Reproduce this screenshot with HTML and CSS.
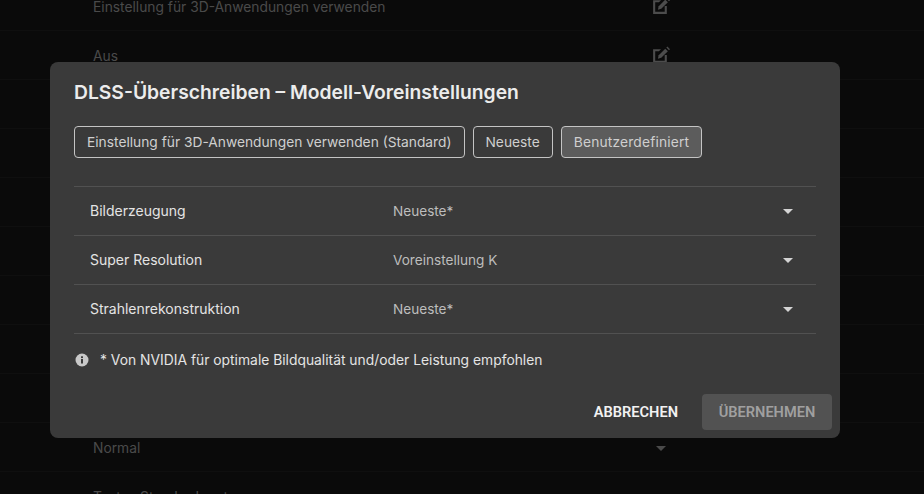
FILE: index.html
```html
<!DOCTYPE html>
<html lang="de">
<head>
<meta charset="utf-8">
<title>DLSS-Überschreiben</title>
<link rel="stylesheet" href="styles.css">
</head>
<body>
<main class="page">
  <div class="bg-row"><span class="bg-label">Einstellung für 3D-Anwendungen verwenden</span><svg class="bg-icon" viewBox="0 0 18 18"><path d="M9.500 3H2v13h13V8.500h-2V14H4V5h3.500z" fill="currentColor"/><path d="M6.500 12l.8-3.200L13.500 2.500l2.500 2.500-6.300 6.200z" fill="currentColor"/><path d="M14.500 1.500l1-1 2.500 2.500-1 1z" fill="currentColor"/></svg></div>
  <div class="bg-row"><span class="bg-label">Aus</span><svg class="bg-icon" viewBox="0 0 18 18"><path d="M9.500 3H2v13h13V8.500h-2V14H4V5h3.500z" fill="currentColor"/><path d="M6.500 12l.8-3.200L13.500 2.500l2.500 2.500-6.300 6.200z" fill="currentColor"/><path d="M14.500 1.500l1-1 2.500 2.500-1 1z" fill="currentColor"/></svg></div>
  <div class="bg-row"></div>
  <div class="bg-row"></div>
  <div class="bg-row"></div>
  <div class="bg-row"></div>
  <div class="bg-row"></div>
  <div class="bg-row"></div>
  <div class="bg-row"></div>
  <div class="bg-row"><span class="bg-label">Normal</span><span class="bg-caret"></span></div>
  <div class="bg-row"><span class="bg-label">Textur-Standardwert</span></div>
</main>

<section class="dialog">
  <h1 class="title">DLSS-Überschreiben – Modell-Voreinstellungen</h1>
  <div class="choices">
    <button class="choice">Einstellung für 3D-Anwendungen verwenden (Standard)</button>
    <button class="choice">Neueste</button>
    <button class="choice choice-on">Benutzerdefiniert</button>
  </div>
  <div class="table">
    <div class="row"><span class="row-name">Bilderzeugung</span><span class="row-value">Neueste*</span><span class="caret"></span></div>
    <div class="row"><span class="row-name">Super Resolution</span><span class="row-value">Voreinstellung K</span><span class="caret"></span></div>
    <div class="row"><span class="row-name">Strahlenrekonstruktion</span><span class="row-value">Neueste*</span><span class="caret"></span></div>
  </div>
  <p class="note">
    <svg class="info" viewBox="0 0 14 14"><circle cx="7" cy="7" r="6.500" fill="currentColor"/><rect x="6" y="6" width="2" height="4.500" fill="#3a3a3a"/><rect x="6" y="3.300" width="2" height="1.800" fill="#3a3a3a"/></svg>
    <span>* Von NVIDIA für optimale Bildqualität und/oder Leistung empfohlen</span>
  </p>
  <div class="actions">
    <button class="btn-text">ABBRECHEN</button>
    <button class="btn-off">ÜBERNEHMEN</button>
  </div>
</section>
</body>
</html>
```

FILE: styles.css
```css
* { box-sizing: border-box; }
html, body { margin: 0; height: 100%; }
body {
  background: #0a0a0a;
  font-family: Inter, "Liberation Sans", sans-serif;
  overflow: hidden;
  position: relative;
}
.page { margin-top: -18px; }
.bg-row {
  height: 49px;
  display: flex;
  align-items: center;
  padding-left: 93px;
  border-bottom: 1px solid #0f0f0f;
}
.bg-label { font-size: 13.8px; color: #4a4a4a; width: 559px; padding-top: 2px; }
.bg-icon { width: 19px; height: 19px; color: #4c4c4c; margin-left: -1px; margin-top: 1px; }
.bg-caret {
  width: 0; height: 0;
  margin-left: 4px;
  margin-top: 2px;
  border-left: 5px solid transparent;
  border-right: 5px solid transparent;
  border-top: 5px solid #4a4a4a;
}
.dialog {
  position: absolute;
  left: 50px; top: 62px;
  width: 790px; height: 376px;
  background: #3a3a3a;
  border-radius: 8px;
  padding: 18px 8px 8px 24px;
  display: flex;
  flex-direction: column;
}
.title {
  margin: 0;
  font-size: 19.3px;
  line-height: 24px;
  font-weight: 600;
  color: #ececec;
}
.choices { display: flex; gap: 8px; margin-top: 22px; }
.choice {
  height: 32px;
  padding: 0 12px;
  font: 400 13.77px Inter, "Liberation Sans", sans-serif;
  color: #cfcfcf;
  background: transparent;
  border: 1px solid #c4c4c4;
  border-radius: 4px;
}
.choice-on { background: #5c5c5c; letter-spacing: 0.18px; }
.table { margin-top: 28px; width: 742px; border-top: 1px solid #515151; }
.row {
  height: 49px;
  display: flex;
  align-items: center;
  padding: 0 23px 0 16px;
  border-bottom: 1px solid #515151;
  font-size: 13.6px;
}
.row-name { width: 303px; color: #e4e4e4; font-size: 14px; margin-top: -1px; }
.row-value { flex: 1; color: #bdbdbd; }
.caret {
  width: 0; height: 0;
  border-left: 5px solid transparent;
  border-right: 5px solid transparent;
  border-top: 5px solid #d4d4d4;
}
.note {
  margin: 17px 0 0 1px;
  display: flex;
  align-items: center;
  gap: 11px;
  font-size: 13.85px;
  line-height: 18px;
  color: #e4e4e4;
}
.info { width: 14px; height: 14px; color: #c8c8c8; flex: none; }
.actions {
  margin-top: auto;
  display: flex;
  justify-content: flex-end;
  align-items: center;
  gap: 8px;
}
.btn-text, .btn-off {
  height: 36px;
  padding: 0 16px;
  border: 0;
  border-radius: 4px;
  font: 600 14.6px Roboto, "Liberation Sans", sans-serif;
  background: transparent;
  color: #f2f2f2;
}
.btn-off { width: 130px; background: #525252; color: #a0a0a0; }
```
